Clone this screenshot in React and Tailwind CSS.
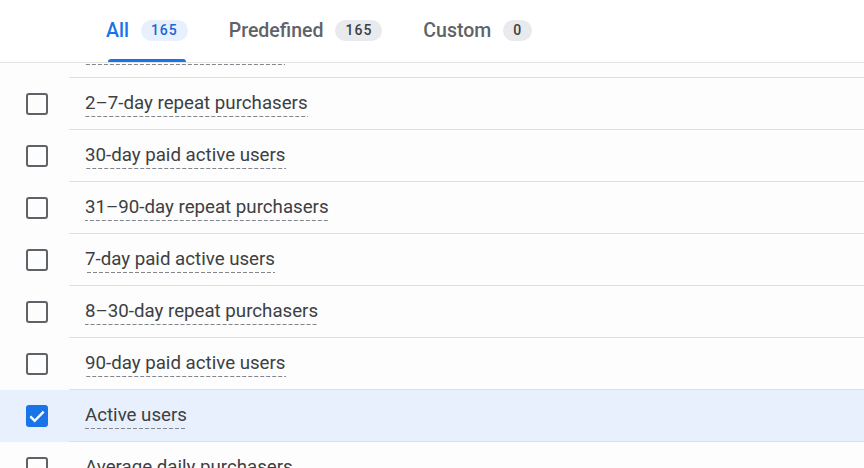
import React from "react";

const tabs = [
  { label: "All", count: 165, active: true },
  { label: "Predefined", count: 165 },
  { label: "Custom", count: 0 },
];

const metrics = [
  { name: "1-day repeat purchasers" },
  { name: "2–7-day repeat purchasers" },
  { name: "30-day paid active users" },
  { name: "31–90-day repeat purchasers" },
  { name: "7-day paid active users" },
  { name: "8–30-day repeat purchasers" },
  { name: "90-day paid active users" },
  { name: "Active users", checked: true },
  { name: "Average daily purchasers" },
];

function Checkbox({ checked }) {
  if (checked) {
    return (
      <div className="w-[22px] h-[22px] rounded-[3px] bg-[#1a73e8] flex items-center justify-center">
        <svg width="20" height="20" viewBox="0 0 24 24" fill="none">
          <path d="M4 12.5l5.2 5.2L20 6.8" stroke="white" strokeWidth="2.8" />
        </svg>
      </div>
    );
  }
  return (
    <div className="w-[22px] h-[22px] rounded-[3px] border-[2.5px] border-[#5f6368]" />
  );
}

export default function App() {
  return (
    <div
      className="w-[864px] h-[468px] overflow-hidden bg-white flex flex-col"
      style={{ fontFamily: "Roboto, 'Noto Sans', sans-serif" }}
    >
      {/* tabs */}
      <header className="h-[63px] shrink-0 border-b border-[#e3e3e3] flex pl-[106px] gap-[41px] bg-white">
        {tabs.map((t) => (
          <div key={t.label} className="flex flex-col">
            <div className="h-[60px] pt-[2px] flex items-center gap-[12px]">
              <span
                className={
                  t.active
                    ? "text-[19.5px] font-medium text-[#1a73e8]"
                    : "text-[19.5px] font-medium text-[#5f6368]"
                }
              >
                {t.label}
              </span>
              <span
                className={
                  t.active
                    ? "h-[21px] px-[10px] rounded-full bg-[#e8f0fe] text-[#1967d2] text-[14px] font-medium tracking-[1px] flex items-center"
                    : "h-[21px] px-[10px] rounded-full bg-[#e8eaed] text-[#3c4043] text-[14px] font-medium tracking-[1px] flex items-center"
                }
              >
                {t.count}
              </span>
            </div>
            <div
              className={
                t.active
                  ? "h-[3px] mx-[2px] rounded-t-[3px] bg-[#1a73e8]"
                  : "h-[3px]"
              }
            />
          </div>
        ))}
      </header>

      {/* list, scrolled a little under the tabs */}
      <div className="flex-1 overflow-hidden">
        <div className="-mt-[37px]">
          {metrics.map((m) => (
            <div
              key={m.name}
              className={
                m.checked
                  ? "h-[52px] flex bg-[#e8f0fe]"
                  : "h-[52px] flex bg-[#fdfdfd]"
              }
            >
              <div className="w-[69px] shrink-0 pl-[26px] flex items-center">
                <Checkbox checked={m.checked} />
              </div>
              <div className="flex-1 border-b border-[#e0e0e0] pl-[16px] flex items-center">
                <span className="inline-block mt-[3px] text-[18.7px] leading-[21px] text-[#3c4043] pb-[3px] bg-[linear-gradient(to_right,#80868b_4px,transparent_4px)] bg-[length:6px_1px] bg-bottom bg-repeat-x">
                  {m.name}
                </span>
              </div>
            </div>
          ))}
        </div>
      </div>
    </div>
  );
}
